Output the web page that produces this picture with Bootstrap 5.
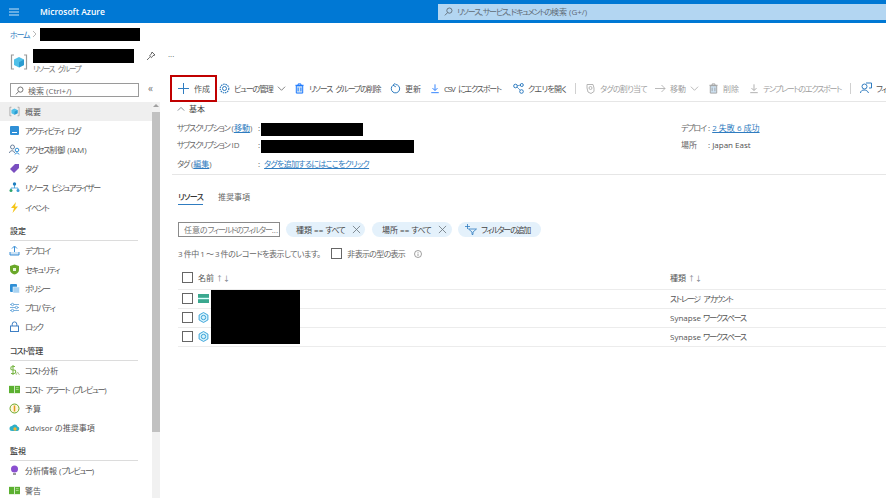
<!DOCTYPE html>
<html lang="ja"><head><meta charset="utf-8"><title>Microsoft Azure</title>
<link href="https://cdn.jsdelivr.net/npm/bootstrap@5.3.0/dist/css/bootstrap.min.css" rel="stylesheet">
<style>
html,body{height:498px;overflow:hidden}
body{font-family:"Open Sans","Noto Sans CJK JP",sans-serif;font-size:8px;line-height:11px;color:#505050;font-feature-settings:"palt";background:#fff}
svg{flex:none;display:block}
a{color:#2f7cc0}
.kn{letter-spacing:-1.2px;word-spacing:2.5px}
.kn2{letter-spacing:-.7px}
.az-top{height:23px;background:#0078d4;color:#fff}
.az-burger{width:40px;padding-left:9px}
.az-brand{font-size:8.5px;font-weight:600;width:398px;font-feature-settings:normal}
.az-search{width:448px;height:16px;background:#b3d6f2;color:#5f6b76;padding-left:6px;gap:4px}
.az-crumb{height:22px;padding-left:10px;gap:3px}
.az-crumb a{text-decoration:none}
.az-mask{background:#000;display:block}
.m-crumb{width:100px;height:13px}
.m-title{width:101px;height:14px;margin-top:2px}
.az-head{height:30px;padding-left:10px}
.az-rg{margin-right:5px;margin-top:4px}
.az-rgsub{font-size:7.5px;color:#777;line-height:9px;margin-top:2px}
.az-pin{margin-left:12px;margin-top:-9px}
.az-dots{margin-left:12px;margin-top:-10px;color:#444}
.az-body{height:423px}
.az-side{width:160px;position:relative;padding-top:8px}
.az-find{margin-left:10px;width:129px;height:14px;border:1px solid #9a9a9a;padding-left:4px;gap:4px;color:#666}
.az-collapse{position:absolute;left:148px;top:8px;font-size:10px;color:#777}
.az-list{margin-top:4.5px;width:152px}
.az-item{height:19.2px;padding-left:9px;gap:5px;color:#555;white-space:nowrap}
.az-item svg{width:11px;height:11px}
.az-item.is-on{background:#efefef}
.az-sec{height:24px;margin:0 14px 0 10px;padding-top:8px;border-bottom:1px solid #dcdcdc;color:#444;font-weight:500}
.az-track{position:absolute;left:152px;top:27px;bottom:0;width:8px;background:#f1f1f1}
.az-arrow{margin:2px auto 0;width:0;height:0;border:3px solid transparent;border-top:0;border-bottom:3px solid #a0a0a0}
.az-thumb{margin-top:5px;height:320px;background:#c1c1c1}
.az-main{width:726px;padding-left:10px;overflow:hidden}
.az-tools{display:grid;height:27px;margin-left:2px;border-bottom:1px solid #e6e6e6;position:relative;align-items:center;
 grid-template-columns:42px 75px 96px 40px 83px 62px 10px 70px 53px 41px 101px 10px 60px;white-space:nowrap}
.az-tool{gap:4px;padding-left:5px;color:#555}
.az-tool.is-off{color:#a0a0a0}
.az-first{padding-left:6px;gap:5px}
.az-red{position:absolute;left:-2px;top:0;width:47px;height:27px;border:2px solid #c00000}
.az-sep{width:1px;height:11px;background:#d0d0d0;display:block;justify-self:center}
.az-ess{height:72.5px;margin-left:2px;border-bottom:1px solid #e6e6e6;padding:0 0 0 5px;position:relative}
.az-esshd{height:16.5px;padding-bottom:3px;gap:4px;color:#444}
.az-row2{height:17px}
.az-row3{margin-top:2px}
.az-lab{width:81px;color:#666;white-space:nowrap}
.az-val{width:504px;flex:none}
.m-sub{width:102px;height:13px;margin:5px 0 0 1px}
.m-id{width:153px;height:13px;margin:5px 0 0 1px}
.az-rlab{width:27px;color:#666;white-space:nowrap}
.az-tabs{height:31px;padding:14px 0 0 8px;gap:15px;color:#666}
.az-tab{padding:2px 0 0;height:16px}
.az-tab.is-on{color:#333;border-bottom:1px solid #2f7cc0;font-weight:500}
.az-filters{margin:16px 0 0 8px;gap:6px;height:16px}
.az-input{width:102px;height:15px;border:1px solid #8a8a8a;padding-left:5px;color:#777;white-space:nowrap;overflow:hidden}
.az-pill{height:15px;background:#e4f1fb;border-radius:8px;padding:0 0 0 10px;gap:7px;color:#444;white-space:nowrap}
.az-p1{width:79px}
.az-p2{width:80px;margin-left:1px}
.az-p3{width:83px;padding-left:7px;gap:4px}
.az-count{margin:8px 0 0 8px;height:16px;color:#666;gap:5px;white-space:nowrap}
.az-countext{letter-spacing:-.5px;margin-right:6px}
.az-info{margin-left:4px}
.az-box{width:11px;height:11px;border:1px solid #666;display:block;flex:none;background:#fff}
.az-tbl{width:708px;margin:5px 0 0 8px;table-layout:fixed;--bs-table-color:#555;--bs-table-bg:transparent}
.az-tbl>*>tr>*{height:19.2px;padding:0;border-bottom:1px solid #ececec;font-size:8px;line-height:11px;font-weight:400;vertical-align:middle}
.az-tbl>thead>tr>*{height:22.5px}
.az-c1{width:492px}
.az-cell{padding-left:4px;gap:5px}
.az-arrows{font-size:7px}
.az-tblwrap{position:relative}
.m-tbl{position:absolute;left:41px;top:23.5px;width:89px;height:54px}
</style></head><body>
<svg width="0" height="0" class="position-absolute">
<symbol id="i-res" viewBox="0 0 18 18"><path d="M4 2H1.500v14H4M14 2h2.500v14H14" fill="none" stroke="#9a9a9a" stroke-width="1.200"/><path d="M9 4l5 2.500v5.500l-5 2.500-5-2.500V6.500z" fill="#50c0e8"/><path d="M9 9.300l5-2.800v5.500l-5 2.500z" fill="#2b9bd0"/></symbol>
<symbol id="i-syn" viewBox="0 0 12 12"><path d="M6 .6l4.800 2.700v5.400L6 11.400 1.200 8.700V3.300z" fill="#d9f2fb" stroke="#2f9fd6"/><circle cx="6" cy="6" r="2.400" fill="none" stroke="#2f9fd6"/></symbol>
<symbol id="i-trash" viewBox="0 0 12 12"><path d="M2.500 3h7v8h-7z" fill="#cfe4f5" stroke="currentColor"/><path d="M1.500 2.500h9M4.500 2.500V1h3v1.500M4.500 5v4M7.500 5v4" fill="none" stroke="currentColor"/></symbol>
<symbol id="i-down" viewBox="0 0 12 12"><path d="M6 1v7M3 5.500L6 8.500l3-3M1.500 11h9" fill="none" stroke="currentColor"/></symbol>
<symbol id="i-chev" viewBox="0 0 10 10"><path d="M1 3l4 4 4-4" fill="none" stroke="currentColor" stroke-width=".8"/></symbol>
<symbol id="i-up" viewBox="0 0 10 10"><path d="M1 7l4-4 4 4" fill="none" stroke="currentColor" stroke-width="1"/></symbol>
<symbol id="i-x" viewBox="0 0 10 10"><path d="M1 1l8 8M9 1l-8 8" fill="none" stroke="currentColor" stroke-width=".9"/></symbol>
<symbol id="i-mag" viewBox="0 0 10 10"><circle cx="6" cy="4" r="2.900" fill="none" stroke="currentColor"/><path d="M4 6.200L1 9.300" stroke="currentColor" fill="none"/></symbol>
<symbol id="i-book" viewBox="0 0 12 12"><path d="M0 2h12v8H0z" fill="#5bb030"/><path d="M6 2v8" stroke="#fff" stroke-width=".8"/><path d="M7.500 4h3M7.500 6h3" stroke="#cfeeb8" stroke-width=".7"/></symbol>
</svg>
<header class="az-top d-flex align-items-center">
<div class="az-burger"><svg width="10" height="8" viewBox="0 0 10 8"><path d="M0 1h10M0 4h10M0 7h10" stroke="#fff" stroke-width=".8"/></svg></div>
<div class="az-brand">Microsoft Azure</div>
<div class="az-search d-flex align-items-center"><svg width="9" height="9"><use href="#i-mag"/></svg><span><span class="kn">リソース、サービス、ドキュメントの</span>検索 (G+/)</span></div>
</header>
<nav class="az-crumb d-flex align-items-center"><a class="kn" href="#">ホーム</a><svg width="5" height="8" viewBox="0 0 5 8"><path d="M1 1l3 3-3 3" fill="none" stroke="#999" stroke-width=".7"/></svg><span class="az-mask m-crumb"></span></nav>
<div class="az-head d-flex align-items-center">
<svg class="az-rg" width="18" height="18"><use href="#i-res"/></svg>
<div><span class="az-mask m-title"></span><div class="az-rgsub kn">リソース グループ</div></div>
<svg class="az-pin" width="10" height="10" viewBox="0 0 10 10"><path d="M6 1l3 3-2 .6-1.500 2L3.500 4.800 5.200 3.200zM3.800 6.200L1 9" fill="none" stroke="#444" stroke-width=".8"/></svg>
<span class="az-dots">···</span>
</div>
<div class="az-body d-flex">
<aside class="az-side">
<div class="az-find d-flex align-items-center"><svg width="9" height="9"><use href="#i-mag"/></svg><span>検索 (Ctrl+/)</span></div>
<span class="az-collapse">«</span>
<div class="az-track"><div class="az-arrow"></div><div class="az-thumb"></div></div>
<div class="az-list">
<div class="az-item is-on d-flex align-items-center"><svg viewBox="0 0 18 18"><use href="#i-res"/></svg>概要</div>
<div class="az-item d-flex align-items-center"><svg viewBox="0 0 11 11"><rect x="1" y="1" width="9" height="9" rx="1" fill="#2f8fd6"/><path d="M3 7.500h5" stroke="#fff"/></svg><span class="kn">アクティビティ ログ</span></div>
<div class="az-item d-flex align-items-center"><svg viewBox="0 0 11 11"><circle cx="3.500" cy="3" r="2" fill="none" stroke="#6b7f9a"/><path d="M.5 9c0-3 5-3 5 0" fill="none" stroke="#6b7f9a"/><circle cx="8" cy="6" r="1.800" fill="none" stroke="#2f8fd6"/><path d="M6 10.500c0-2 4-2 4 0" fill="none" stroke="#2f8fd6"/></svg><span><span class="kn">アクセス</span>制御 (IAM)</span></div>
<div class="az-item d-flex align-items-center"><svg viewBox="0 0 11 11"><path d="M1 6l5-5h4v4l-5 5z" fill="#7a4fc0"/></svg><span class="kn">タグ</span></div>
<div class="az-item d-flex align-items-center"><svg viewBox="0 0 11 11"><path d="M5.500 3v3M2 8V6h7v2" fill="none" stroke="#3a9ad9" stroke-width=".8"/><circle cx="5.500" cy="2" r="1.700" fill="#1f7fbf"/><circle cx="2" cy="8.500" r="1.500" fill="#2fa36b"/><circle cx="9" cy="8.500" r="1.500" fill="#3a9ad9"/></svg><span class="kn">リソース ビジュアライザー</span></div>
<div class="az-item d-flex align-items-center"><svg viewBox="0 0 11 11"><path d="M7 0L2 6h3L3.500 11 9 4.500H6z" fill="#f5c518"/></svg><span class="kn">イベント</span></div>
<div class="az-sec">設定</div>
<div class="az-item d-flex align-items-center"><svg viewBox="0 0 11 11"><path d="M5.500 7V1.500M3 3.500L5.500 1 8 3.500" fill="none" stroke="#3a8fd6"/><path d="M1 7v3h9V7" fill="#cfe4f5" stroke="#3a8fd6"/></svg><span class="kn">デプロイ</span></div>
<div class="az-item d-flex align-items-center"><svg viewBox="0 0 11 11"><path d="M5.500.5L10 2v4c0 2.500-2.500 4-4.500 4.500C3.500 10 1 8.500 1 6V2z" fill="#6aa829"/><rect x="4" y="4" width="3" height="3" fill="#e8f5d8"/></svg><span class="kn">セキュリティ</span></div>
<div class="az-item d-flex align-items-center"><svg viewBox="0 0 11 11"><rect x="1" y="1" width="7" height="8" rx="1" fill="#2f8fd6"/><rect x="4" y="4" width="6.500" height="6" fill="#a9d3f2" stroke="#fff" stroke-width=".5"/></svg><span class="kn">ポリシー</span></div>
<div class="az-item d-flex align-items-center"><svg viewBox="0 0 11 11"><path d="M1 2.500h9M1 5.500h9M1 8.500h9" stroke="#7fb2dc"/><circle cx="3.500" cy="2.500" r="1.200" fill="#fff" stroke="#3a8fd6" stroke-width=".7"/><circle cx="7.500" cy="5.500" r="1.200" fill="#fff" stroke="#3a8fd6" stroke-width=".7"/><circle cx="3.500" cy="8.500" r="1.200" fill="#fff" stroke="#3a8fd6" stroke-width=".7"/></svg><span class="kn">プロパティ</span></div>
<div class="az-item d-flex align-items-center"><svg viewBox="0 0 11 11"><rect x="1.500" y="5" width="8" height="5.500" fill="none" stroke="#3f7fc4"/><path d="M3.200 5V3.200a2.300 2.300 0 014.600 0V5" fill="none" stroke="#3f7fc4"/></svg><span class="kn">ロック</span></div>
<div class="az-sec"><span class="kn">コスト</span>管理</div>
<div class="az-item d-flex align-items-center"><svg viewBox="0 0 11 11"><path d="M6 1.500H3.500a1.500 1.500 0 000 3.500h1.500a1.500 1.500 0 010 3.500H2M4 0v10" fill="none" stroke="#7ab648" stroke-width="1.100"/><path d="M7 10l1.500-3 2 3" fill="none" stroke="#b6c99a"/></svg><span><span class="kn">コスト</span>分析</span></div>
<div class="az-item d-flex align-items-center"><svg viewBox="0 0 12 12"><use href="#i-book"/></svg><span class="kn">コスト アラート (プレビュー)</span></div>
<div class="az-item d-flex align-items-center"><svg viewBox="0 0 11 11"><circle cx="5.500" cy="5.500" r="4.500" fill="#fff6dc" stroke="#6aa829"/><path d="M5.500 2.500v6" stroke="#e09a1a" stroke-width="1.500"/></svg>予算</div>
<div class="az-item d-flex align-items-center"><svg viewBox="0 0 11 11"><path d="M3 9a2.500 2.500 0 010-5 3 3 0 015.500.5A2.300 2.300 0 018.500 9z" fill="#2fb0c8"/><circle cx="6" cy="7" r="1.700" fill="#f2b632"/></svg><span>Advisor の推奨事項</span></div>
<div class="az-sec">監視</div>
<div class="az-item d-flex align-items-center"><svg viewBox="0 0 11 11"><circle cx="5.500" cy="4" r="3.500" fill="#8a4fd0"/><rect x="4" y="8" width="3" height="2" fill="#9a9a9a"/></svg><span>分析情報 (<span class="kn">プレビュー</span>)</span></div>
<div class="az-item d-flex align-items-center"><svg viewBox="0 0 12 12"><use href="#i-book"/></svg>警告</div>
</div>
</aside>
<main class="az-main">
<div class="az-tools">
<span class="az-red"></span>
<div class="az-tool az-first d-flex align-items-center"><svg width="11" height="11" viewBox="0 0 11 11"><path d="M5.500 0v11M0 5.500h11" stroke="#2f7cc0"/></svg>作成</div>
<div class="az-tool d-flex align-items-center"><svg width="11" height="11" viewBox="0 0 11 11"><circle cx="5.500" cy="5.500" r="2" fill="none" stroke="#2f7cc0"/><circle cx="5.500" cy="5.500" r="4.300" fill="none" stroke="#2f7cc0" stroke-dasharray="1.500 .8" stroke-width="1.200"/></svg><span class="kn">ビューの管理</span><svg width="9" height="9"><use href="#i-chev"/></svg></div>
<div class="az-tool d-flex align-items-center"><svg class="text-primary" width="11" height="11"><use href="#i-trash"/></svg><span class="kn">リソース グループの削除</span></div>
<div class="az-tool d-flex align-items-center"><svg width="11" height="11" viewBox="0 0 11 11"><path d="M3 2.300a4.200 4.200 0 102.500-.8M5.500 0L3 2.200l2.800 1.600" fill="none" stroke="#2f7cc0"/></svg>更新</div>
<div class="az-tool d-flex align-items-center"><svg class="text-primary" width="10" height="11"><use href="#i-down"/></svg><span class="kn">CSV にエクスポート</span></div>
<div class="az-tool d-flex align-items-center"><svg width="11" height="11" viewBox="0 0 11 11"><path d="M3 3l5-1M3 3l5 5" fill="none" stroke="#2f7cc0" stroke-width=".7"/><circle cx="2.500" cy="3" r="1.800" fill="#fff" stroke="#2f7cc0"/><circle cx="8.800" cy="2" r="1.500" fill="#fff" stroke="#2f7cc0"/><circle cx="8.500" cy="8.500" r="1.800" fill="#fff" stroke="#2f7cc0"/></svg><span class="kn2">クエリを開く</span></div>
<span class="az-sep"></span>
<div class="az-tool is-off d-flex align-items-center"><svg width="11" height="11" viewBox="0 0 11 11"><path d="M2 5V1.500h6l1 3.500v3.500L6 10.500 3 9z" fill="none" stroke="#b5b5b5"/><circle cx="5.500" cy="5" r="1.500" fill="none" stroke="#b5b5b5"/></svg><span class="kn2">タグの割り当て</span></div>
<div class="az-tool is-off d-flex align-items-center"><svg width="11" height="9" viewBox="0 0 11 9"><path d="M0 4.500h10M6.500 1L10 4.500 6.500 8" fill="none" stroke="#a8a8a8" stroke-width=".8"/></svg>移動<svg width="9" height="9"><use href="#i-chev"/></svg></div>
<div class="az-tool is-off d-flex align-items-center"><svg width="11" height="11"><use href="#i-trash"/></svg>削除</div>
<div class="az-tool is-off d-flex align-items-center"><svg width="10" height="11"><use href="#i-down"/></svg><span class="kn">テンプレートのエクスポート</span></div>
<span class="az-sep"></span>
<div class="az-tool d-flex align-items-center"><svg width="12" height="12" viewBox="0 0 12 12"><circle cx="4.500" cy="4.500" r="2.500" fill="none" stroke="#2f7cc0"/><path d="M.5 11c0-4 7-4 8 0M6 1h5.500v5H9" fill="none" stroke="#2f7cc0"/></svg><span class="kn">フィードバック</span></div>
</div>
<section class="az-ess">
<div class="az-esshd d-flex align-items-center"><svg width="8" height="8" class="text-secondary"><use href="#i-up"/></svg>基本</div>
<div class="d-flex">
<div class="az-val"><div class="az-row2 d-flex align-items-center"><span class="az-lab"><span class="kn">サブスクリプション</span> (<a href="#">移動</a>)</span>:<span class="az-mask m-sub"></span></div>
<div class="az-row2 d-flex align-items-center"><span class="az-lab"><span class="kn">サブスクリプション</span> ID</span>:<span class="az-mask m-id"></span></div>
<div class="az-row2 az-row3 d-flex align-items-center"><span class="az-lab"><span class="kn">タグ</span> (<a href="#">編集</a>)</span>:<a class="ms-1" href="#"><span class="kn2">タグを追加するにはここをクリック</span></a></div></div>
<div><div class="az-row2 d-flex align-items-center"><span class="az-rlab kn">デプロイ</span>:&nbsp;<a href="#">2 失敗 6 成功</a></div>
<div class="az-row2 d-flex align-items-center"><span class="az-rlab">場所</span>:&nbsp;Japan East</div></div>
</div>
</section>
<div class="az-tabs d-flex"><span class="az-tab is-on kn2">リソース</span><span class="az-tab">推奨事項</span></div>
<div class="az-filters d-flex align-items-center">
<div class="az-input d-flex align-items-center"><span>任意の<span class="kn">フィールドのフィルター</span>...</span></div>
<div class="az-pill az-p1 d-flex align-items-center"><span>種類 == <span class="kn2">すべて</span></span><svg width="9" height="9" class="text-secondary"><use href="#i-x"/></svg></div>
<div class="az-pill az-p2 d-flex align-items-center"><span>場所 == <span class="kn2">すべて</span></span><svg width="9" height="9" class="text-secondary"><use href="#i-x"/></svg></div>
<div class="az-pill az-p3 d-flex align-items-center"><svg width="12" height="11" viewBox="0 0 12 11"><path d="M0 2.500h5M2.500 0v5" stroke="#2f7cc0" stroke-width=".8"/><path d="M3.500 5h8L8 8v2.500H7V8z" fill="none" stroke="#2f7cc0" stroke-width=".8"/></svg><span class="kn">フィルターの追加</span></div>
</div>
<div class="az-count d-flex align-items-center"><span class="az-countext">3 件中 1 ～ 3 件のレコードを表示しています。</span><span class="az-box"></span><span class="kn2">非表示の型の表示</span><svg class="az-info" width="8" height="8" viewBox="0 0 8 8"><circle cx="4" cy="4" r="3.500" fill="none" stroke="#777" stroke-width=".7"/><path d="M4 3.500v2.500M4 2v.8" stroke="#777" stroke-width=".7"/></svg></div>
<div class="az-tblwrap">
<table class="table az-tbl mb-0">
<thead><tr><th class="az-c1"><div class="az-cell d-flex align-items-center"><span class="az-box"></span><span>名前 <span class="text-secondary az-arrows">↑↓</span></span></div></th><th>種類 <span class="text-secondary az-arrows">↑↓</span></th></tr></thead>
<tbody>
<tr><td><div class="az-cell d-flex align-items-center"><span class="az-box"></span><svg width="11" height="9" viewBox="0 0 11 9"><rect width="11" height="9" fill="#3aa88f"/><rect y="3.800" width="11" height="1.400" fill="#dff"/></svg></div></td><td><span class="kn">ストレージ アカウント</span></td></tr>
<tr><td><div class="az-cell d-flex align-items-center"><span class="az-box"></span><svg width="11" height="11"><use href="#i-syn"/></svg></div></td><td>Synapse <span class="kn">ワークスペース</span></td></tr>
<tr><td><div class="az-cell d-flex align-items-center"><span class="az-box"></span><svg width="11" height="11"><use href="#i-syn"/></svg></div></td><td>Synapse <span class="kn">ワークスペース</span></td></tr>
</tbody></table>
<span class="az-mask m-tbl"></span>
</div>
</main>
</div>
<script src="https://cdn.jsdelivr.net/npm/bootstrap@5.3.0/dist/js/bootstrap.bundle.min.js"></script>
</body></html>
